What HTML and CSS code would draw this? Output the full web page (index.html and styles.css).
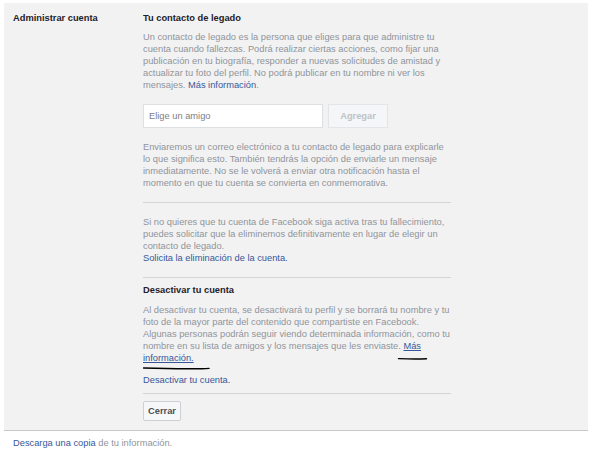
FILE: index.html
```html
<!DOCTYPE html>
<html lang="es">
<head>
<meta charset="utf-8">
<title>Administrar cuenta</title>
<link rel="stylesheet" href="styles.css">
</head>
<body>
<div class="panel">
  <div class="label">Administrar cuenta</div>
  <div class="content">
    <div class="title">Tu contacto de legado</div>
    <p class="text t1">Un contacto de legado es la persona que eliges para que administre tu cuenta cuando fallezcas. Podrá realizar ciertas acciones, como fijar una publicación en tu biografía, responder a nuevas solicitudes de amistad y actualizar tu foto del perfil. No podrá publicar en tu nombre ni ver los mensajes. <a class="link" href="#">Más información</a>.</p>
    <div class="picker">
      <input class="friend" type="text" placeholder="Elige un amigo">
      <button class="add" type="button">Agregar</button>
    </div>
    <p class="text t2">Enviaremos un correo electrónico a tu contacto de legado para explicarle lo que significa esto. También tendrás la opción de enviarle un mensaje inmediatamente. No se le volverá a enviar otra notificación hasta el momento en que tu cuenta se convierta en conmemorativa.</p>
    <hr class="divider d1">
    <p class="text t3">Si no quieres que tu cuenta de Facebook siga activa tras tu fallecimiento, puedes solicitar que la eliminemos definitivamente en lugar de elegir un contacto de legado.<br><a class="link" href="#">Solicita la eliminación de la cuenta.</a></p>
    <hr class="divider d2">
    <div class="title t-deact">Desactivar tu cuenta</div>
    <div class="annotated">
      <p class="text t4">Al desactivar tu cuenta, se desactivará tu perfil y se borrará tu nombre y tu foto de la mayor parte del contenido que compartiste en Facebook. Algunas personas podrán seguir viendo determinada información, como tu nombre en su lista de amigos y los mensajes que les enviaste. <a class="link under" href="#">Más información.</a></p>
      <svg class="marks" width="308" height="70" viewBox="0 0 308 70" aria-hidden="true">
        <path d="M255.5 54.6 C264 55 274 55.2 283.5 54.8" stroke="#000" stroke-width="1.4" fill="none" stroke-linecap="round"/>
        <path d="M0.5 64 C20 64.6 40 64.8 52 64.7 C57 64.6 61 65 66 64.4" stroke="#000" stroke-width="1.4" fill="none" stroke-linecap="round"/>
      </svg>
    </div>
    <a class="link deact" href="#">Desactivar tu cuenta.</a>
    <hr class="divider d3">
    <button class="close" type="button">Cerrar</button>
  </div>
</div>
<p class="footer"><a class="link" href="#">Descarga una copia</a> de tu información.</p>
</body>
</html>
```
FILE: styles.css
```css
* { box-sizing: border-box; }
html, body { margin: 0; padding: 0; background: #fff; }
body {
  font-family: "Liberation Sans", Arial, Helvetica, sans-serif;
  font-size: 9.3px;
  line-height: 12px;
  color: #1d2129;
  width: 600px;
  height: 457px;
  overflow: hidden;
}
.panel {
  margin: 3px 0 0 4px;
  width: 584px;
  background: #f2f2f2;
  border-bottom: 1px solid #c9c9c9;
  display: flex;
  padding: 9px 0 9px 0;
}
.label {
  width: 139px;
  padding-left: 9px;
  font-weight: bold;
  color: #1d2129;
}
.content {
  width: 308px;
  display: flex;
  flex-direction: column;
  align-items: flex-start;
}
.title { font-weight: bold; color: #1d2129; }
.text { margin: 0; color: #90949c; width: 308px; }
.t1 { margin-top: 7px; }
.link { color: #365899; text-decoration: none; }
.link.under { text-decoration: underline; }
.picker { display: flex; gap: 5px; margin-top: 13px; }
.friend {
  width: 180px;
  height: 24px;
  border: 1px solid #dddfe2;
  background: #fff;
  padding: 0 5px;
  font: 9.3px "Liberation Sans", Arial, sans-serif;
  color: #1d2129;
  outline: none;
  margin: 0;
}
.friend::placeholder { color: #7d8085; }
.add {
  width: 60px;
  height: 24px;
  margin: 0;
  border: 1px solid #e3e5e8;
  background: #f5f6f7;
  color: #bec3c9;
  font: bold 9.3px "Liberation Sans", Arial, sans-serif;
  padding: 0;
}
.t2 { margin-top: 13px; }
.divider {
  width: 308px;
  height: 1px;
  border: 0;
  background: #d3d4d6;
  margin: 13px 0 0 0;
}
.t3 { margin-top: 13px; }
.t-deact { margin-top: 6px; }
.annotated { position: relative; margin-top: 8px; }
.marks { position: absolute; left: 0; top: 0; pointer-events: none; }
.deact { margin-top: 10px; display: block; }
.d3 { margin-top: 7px; }
.close {
  margin-top: 7px;
  width: 38px;
  height: 20px;
  padding: 0;
  border: 1px solid #ced0d4;
  border-radius: 2px;
  background: #f6f7f9;
  color: #4b4f56;
  font: bold 9.3px "Liberation Sans", Arial, sans-serif;
}
.footer {
  margin: 6px 0 0 13px;
  color: #90949c;
}
```
